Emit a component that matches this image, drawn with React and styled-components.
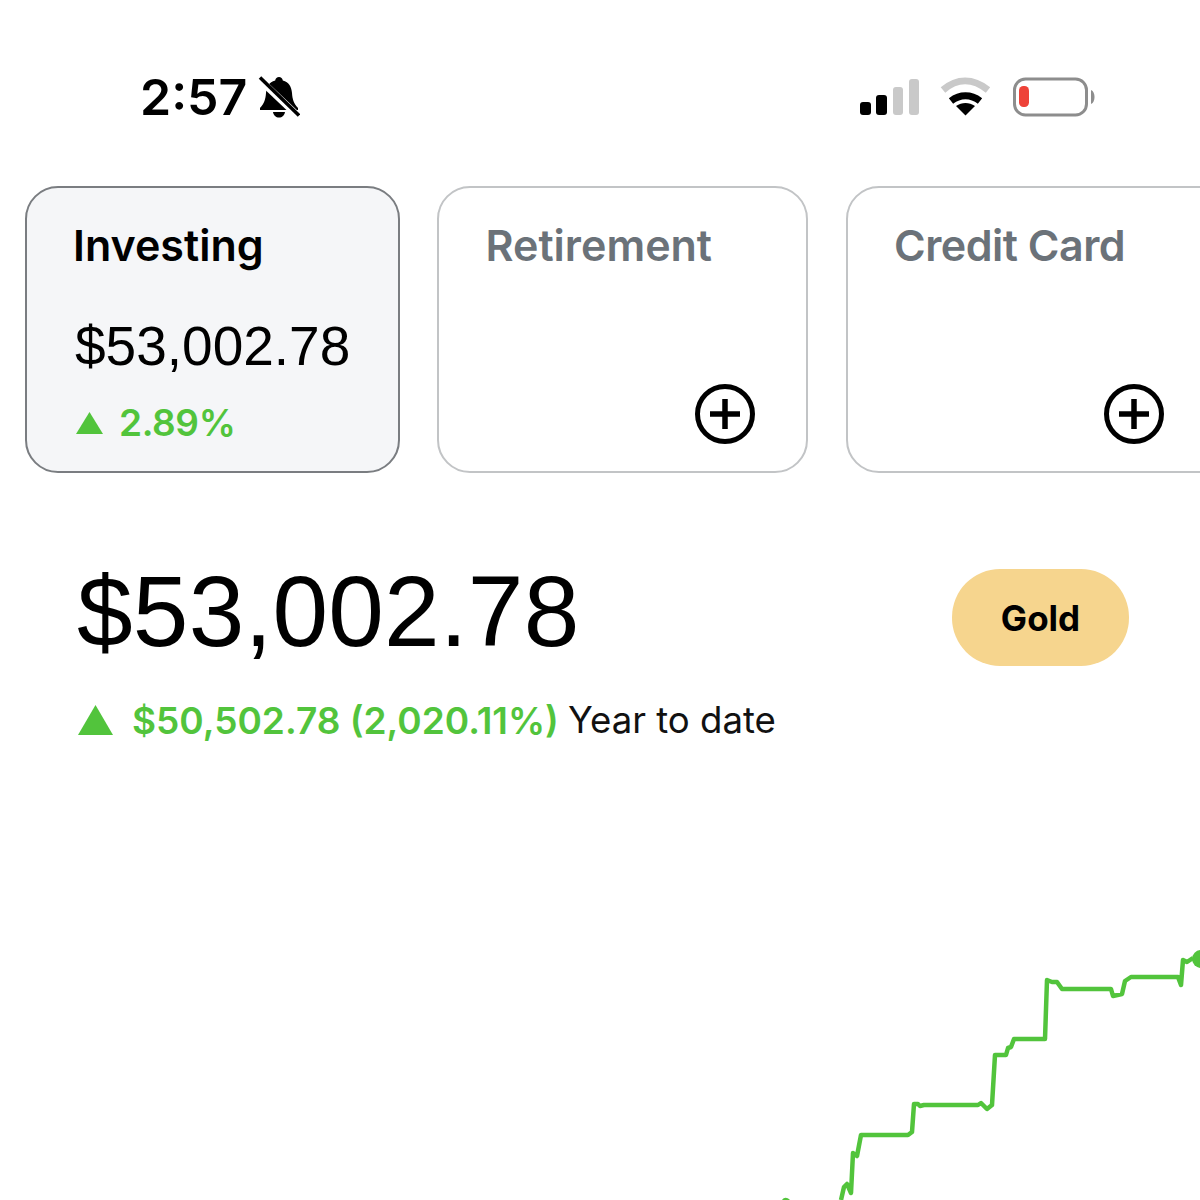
import styled, { createGlobalStyle } from "styled-components";

const GlobalStyle = createGlobalStyle`
  html, body {
    margin: 0;
    padding: 0;
    background: #fff;
  }
  body {
    font-family: "Inter", "Liberation Sans", sans-serif;
    color: #000;
  }
`;

const GREEN = "#52c43c";

const Page = styled.div`
  width: 1200px;
  height: 1200px;
  overflow: hidden;
  background: #fff;
`;

const StatusBar = styled.div`
  height: 186px;
  box-sizing: border-box;
  padding: 72px 105px 0 140px;
  display: flex;
  justify-content: space-between;
  align-items: flex-start;
`;

const TimeGroup = styled.div`
  display: flex;
  align-items: center;
  gap: 11px;
  height: 50px;
`;

const Time = styled.span`
  font-size: 50px;
  font-weight: 600;
  line-height: 50px;
`;

const StatusIcons = styled.div`
  display: flex;
  align-items: center;
  margin-top: 5px;
`;

const Cards = styled.div`
  display: flex;
  gap: 37.5px;
  padding-left: 24.5px;
`;

const Card = styled.div`
  flex: none;
  box-sizing: border-box;
  width: ${(p) => p.$width}px;
  height: 287px;
  padding: 32px 0 0 46.5px;
  border-radius: 33px;
  border: 2px solid ${(p) => (p.$active ? "#7a7d81" : "#c2c4c6")};
  background: ${(p) => (p.$active ? "#f5f6f8" : "#fff")};
  display: flex;
  flex-direction: column;
`;

const CardTitle = styled.div`
  font-size: 43px;
  font-weight: 600;
  line-height: 50px;
  letter-spacing: ${(p) => (p.$tight ? "-0.5px" : "0")};
  color: ${(p) => (p.$active ? "#000" : "#6b7279")};
`;

const CardAmount = styled.div`
  margin-top: 45px;
  margin-left: 2px;
  font-family: "Liberation Sans", sans-serif;
  font-size: 55px;
  line-height: 62px;
`;

const CardChange = styled.div`
  margin-top: 23px;
  margin-left: 3px;
  display: flex;
  align-items: center;
  gap: 16px;
  font-weight: 600;
  font-size: 37px;
  line-height: 46px;
  letter-spacing: -0.4px;
  color: ${GREEN};
`;

const AddSlot = styled.div`
  flex: 1;
  display: flex;
  justify-content: flex-end;
  align-items: flex-end;
  padding: 0 ${(p) => p.$right}px 27px 0;
`;

const BalanceRow = styled.div`
  margin-top: 82px;
  padding: 14px 71px 0 77px;
  height: 97px;
  box-sizing: border-box;
  display: flex;
  justify-content: space-between;
  align-items: flex-start;
`;

const Balance = styled.div`
  font-family: "Liberation Sans", sans-serif;
  font-size: 100px;
  line-height: 84px;
  letter-spacing: 0.2px;
`;

const GoldPill = styled.div`
  width: 177px;
  height: 97px;
  border-radius: 48px;
  background: #f6d58e;
  display: flex;
  align-items: center;
  justify-content: center;
  font-size: 35px;
  font-weight: 700;
`;

const ChangeRow = styled.div`
  margin-top: 43px;
  padding-left: 78px;
  display: flex;
  align-items: center;
  height: 50px;
`;

const ChangeValue = styled.span`
  margin-left: 19px;
  font-weight: 600;
  font-size: 37px;
  color: ${GREEN};
`;

const ChangeLabel = styled.span`
  margin-left: 9px;
  font-size: 36.6px;
  color: #111;
`;

const Chart = styled.div`
  margin-top: 45px;
  height: 410px;
`;

const Triangle = ({ w, h }) => (
  <svg width={w} height={h} viewBox="0 0 10 10" preserveAspectRatio="none">
    <polygon points="5,0 10,10 0,10" fill={GREEN} />
  </svg>
);

const AddIcon = () => (
  <svg width="60" height="60" viewBox="0 0 60 60" fill="none" stroke="#000">
    <circle cx="30" cy="30" r="27.5" strokeWidth="5" />
    <path d="M30 15v30M15 30h30" strokeWidth="5.5" />
  </svg>
);

const BellOff = () => (
  <svg width="42" height="42" viewBox="0 0 42 42">
    <path
      d="M21 1c2 0 3.500 1.500 3.800 3.500C31 6 33.500 11 34 17c.4 6 1.500 10 6 15v2H2v-2c4.500-5 5.500-9 6-15C8.500 11 11 6 17.200 4.500 17.500 2.500 19 1 21 1z"
      fill="#000"
    />
    <path d="M15 36h12c-.5 3.500-3 5.500-6 5.500s-5.500-2-6-5.500z" fill="#000" />
    <path d="M1 3l40 38" stroke="#fff" strokeWidth="7" />
    <path d="M2 1.500l39 38" stroke="#000" strokeWidth="3.500" />
  </svg>
);

const StatusGlyphs = () => (
  <svg width="235" height="40" viewBox="860 77 235 40">
    <rect x="860" y="102" width="11" height="13" rx="3" fill="#000" />
    <rect x="876" y="95" width="11" height="20" rx="3" fill="#000" />
    <rect x="893" y="87" width="10" height="28" rx="3" fill="#c9c9c9" />
    <rect x="909" y="79" width="10" height="36" rx="3" fill="#c9c9c9" />
    <path d="M943 90c14-12 30-12 45 0" fill="none" stroke="#c9c9c9" strokeWidth="7" />
    <path d="M951 101c9-7 20-7 29 0" fill="none" stroke="#000" strokeWidth="7" />
    <path d="M956 106c6-4 13-4 19 0l-9.500 9.500z" fill="#000" />
    <rect x="1014.500" y="79" width="72" height="36" rx="11" fill="none" stroke="#8d8d8d" strokeWidth="3" />
    <rect x="1019" y="86" width="10" height="21" rx="4.500" fill="#ee4238" />
    <path d="M1091 90c2.500 1 3.500 4 3.500 7s-1 6-3.500 7z" fill="#8d8d8d" />
  </svg>
);

const linePoints = [
  [841, 1200], [844, 1187], [847, 1184], [851, 1193], [853, 1153], [857, 1156],
  [861, 1135], [908, 1135], [912, 1132], [914, 1104], [918, 1104], [920, 1106],
  [924, 1105], [978, 1105], [981, 1103], [987, 1109], [992, 1105], [995, 1055],
  [1006, 1055], [1008, 1048], [1011, 1047], [1014, 1039], [1045, 1039], [1047, 980],
  [1052, 982], [1057, 982], [1062, 989], [1111, 989], [1113, 996], [1122, 994],
  [1125, 981], [1131, 977], [1178, 977], [1181, 985], [1183, 960], [1187, 962],
  [1193, 958],
];

const GrowthChart = () => (
  <svg width="1200" height="410" viewBox="0 790 1200 410" style={{ display: "block" }}>
    <polyline
      points={linePoints.map((p) => p.join(",")).join(" ")}
      fill="none"
      stroke={GREEN}
      strokeWidth="4.500"
      strokeLinejoin="round"
    />
    <path d="M782 1200c2-3 5-3 8 0z" fill={GREEN} />
    <circle cx="1201" cy="959" r="9" fill={GREEN} />
  </svg>
);

export default function App() {
  return (
    <Page>
      <GlobalStyle />
      <StatusBar>
        <TimeGroup>
          <Time>2:57</Time>
          <BellOff />
        </TimeGroup>
        <StatusIcons>
          <StatusGlyphs />
        </StatusIcons>
      </StatusBar>
      <Cards>
        <Card $active $width={375}>
          <CardTitle $active>Investing</CardTitle>
          <CardAmount>$53,002.78</CardAmount>
          <CardChange>
            <Triangle w={27} h={22} />
            2.89%
          </CardChange>
        </Card>
        <Card $width={371}>
          <CardTitle>Retirement</CardTitle>
          <AddSlot $right={51}>
            <AddIcon />
          </AddSlot>
        </Card>
        <Card $width={400}>
          <CardTitle $tight>Credit Card</CardTitle>
          <AddSlot $right={80}>
            <AddIcon />
          </AddSlot>
        </Card>
      </Cards>
      <BalanceRow>
        <Balance>$53,002.78</Balance>
        <GoldPill>Gold</GoldPill>
      </BalanceRow>
      <ChangeRow>
        <Triangle w={35} h={30} />
        <ChangeValue>$50,502.78 (2,020.11%)</ChangeValue>
        <ChangeLabel>Year to date</ChangeLabel>
      </ChangeRow>
      <Chart>
        <GrowthChart />
      </Chart>
    </Page>
  );
}
